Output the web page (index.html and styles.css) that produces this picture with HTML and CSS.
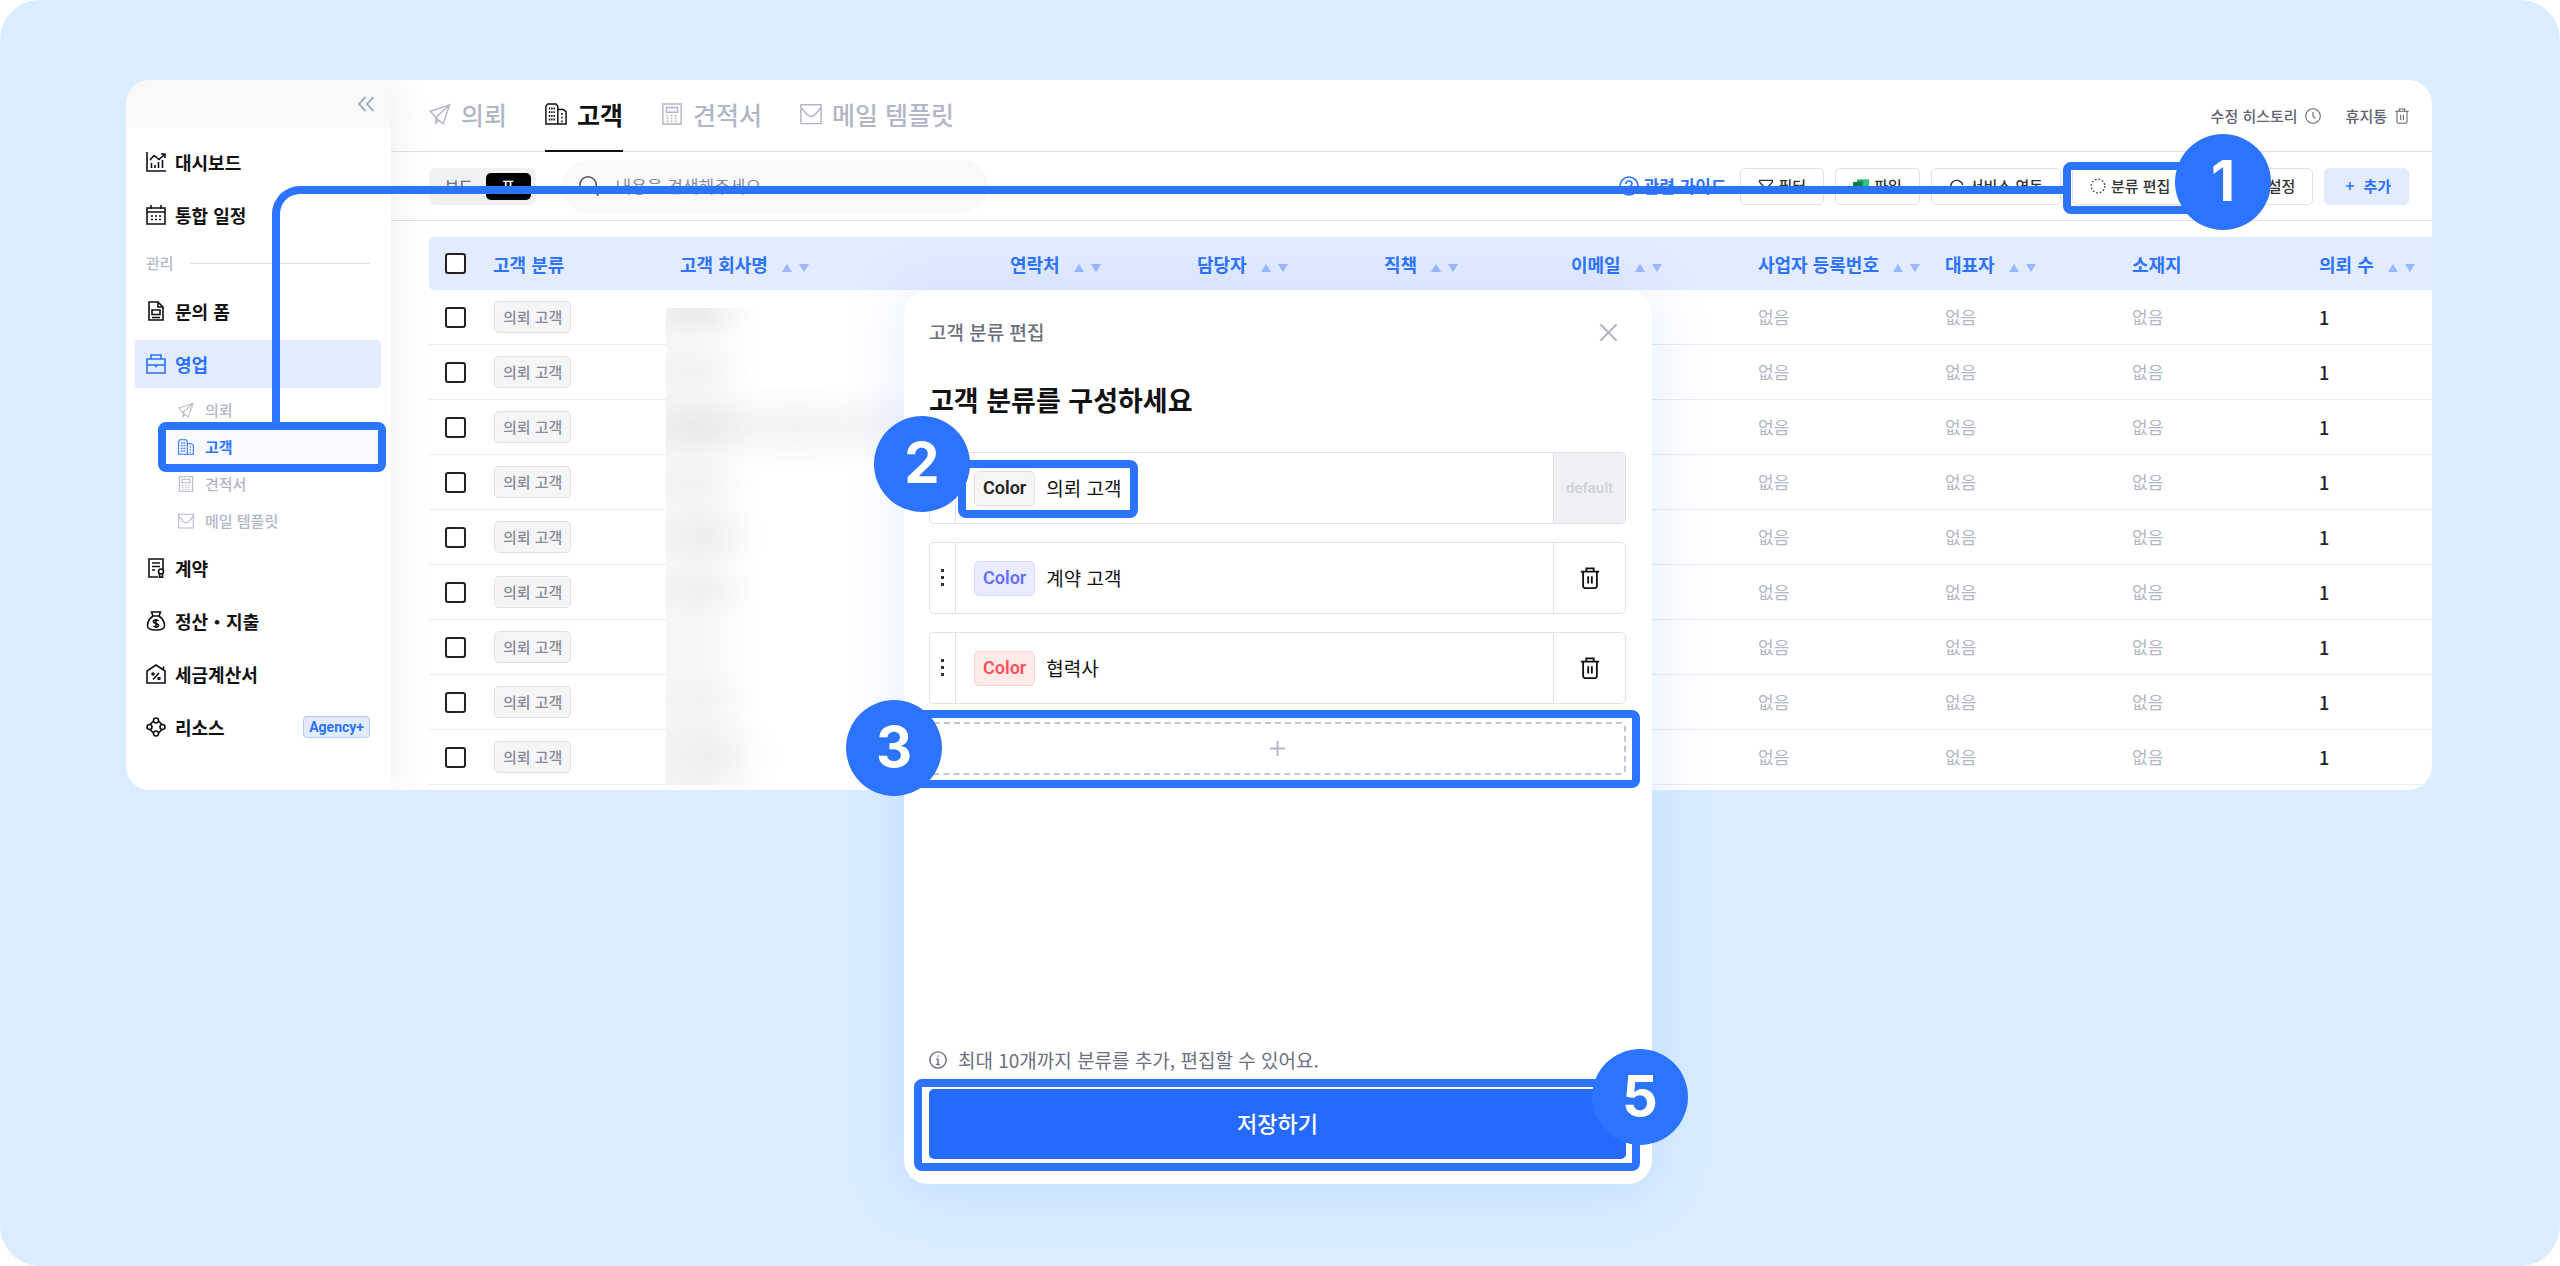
FILE: index.html
```html
<!DOCTYPE html>
<html lang="ko">
<head>
  <meta charset="UTF-8">
  <title>고객 분류 편집 가이드</title>
  <link rel="stylesheet" href="styles.css">
</head>
<body>

  <!-- icon sprite -->
  <svg class="sprite" aria-hidden="true">
    <symbol id="i-plane" viewBox="0 0 24 24"><path d="M1.500 9 22.500 2 15.500 22.500 10 18.500 1.500 9ZM22.500 2 7.500 15.500M7.500 15.500V22l3-3.500"/></symbol>
    <symbol id="i-building" viewBox="0 0 24 24"><path d="M1 23V3.500L3 1h9l2 2.500V23ZM14 7h6l3 2.500V23h-9"/><path stroke-dasharray="2 2" d="M5 5v15M7.500 5v15M10 5v15M18.500 11v10"/></symbol>
    <symbol id="i-calc" viewBox="0 0 24 24"><path d="M2 1h20v22H2ZM6 5h12v5H6Z"/><path stroke-dasharray="2 2.500" d="M6 14h13M6 17h13M6 20h13"/></symbol>
    <symbol id="i-mail" viewBox="0 0 24 24"><path d="M1 2h22v20.500H1ZM1.500 5.500 8 13q4 3.500 8 0l6.500-7.500"/></symbol>
    <symbol id="i-trash" viewBox="0 0 24 24"><path d="M2 5h20M8 5V1.500h8V5M4.500 5v16.500l1.500 1.500h12l1.500-1.500V5M10 10v8M14 10v8"/></symbol>
  </svg>

  <div class="canvas">
    <div class="app">

      <aside class="sidebar">
        <div class="sidebar-top">
          <button class="icon-btn" aria-label="메뉴 접기">
            <svg class="icon collapse" viewBox="0 0 18 16"><path d="M8.500 1 2 8l6.500 7M16.500 1 10 8l6.500 7"/></svg>
          </button>
        </div>
        <nav class="menu">
          <a class="menu-item" href="#"><svg class="icon" viewBox="0 0 20 20"><path d="M1 0v19h19M5.500 16v-5M9 16v-3M12.500 16v-6M16.500 16V8M4 8l4-4.500 5 4L19 2M15 2h4v4"/></svg>대시보드</a>
          <a class="menu-item" href="#"><svg class="icon" viewBox="0 0 20 20"><path d="M1 3h18v16H1ZM1 7h18M5 0v4M15 0v4"/><path stroke-dasharray="2 2" d="M5 11h10M5 14.500h10"/></svg>통합 일정</a>
          <div class="menu-label">관리</div>
          <a class="menu-item" href="#"><svg class="icon" viewBox="0 0 20 20"><path d="M3 1h9l5 5v13H3ZM6 9h8v4.500H6ZM6 16.500h8M12 1v5h5"/></svg>문의 폼</a>
          <a class="menu-item active" href="#"><svg class="icon" viewBox="0 0 20 20"><path d="M1 5h18v14H1ZM5 5V1h10v4M1 11h18M9 11l1 1.500 1-1.500"/></svg>영업</a>
          <div class="submenu">
            <a class="sub-item" href="#"><svg class="icon"><use href="#i-plane"/></svg>의뢰</a>
            <a class="sub-item current" href="#"><svg class="icon"><use href="#i-building"/></svg>고객<span class="frame frame-menu"></span></a>
            <a class="sub-item" href="#"><svg class="icon"><use href="#i-calc"/></svg>견적서</a>
            <a class="sub-item" href="#"><svg class="icon"><use href="#i-mail"/></svg>메일 템플릿</a>
          </div>
          <a class="menu-item" href="#"><svg class="icon" viewBox="0 0 20 20"><path d="M12 19H3V1h14v10M6 5h8M6 8.500h8M6 12h3"/><circle cx="15" cy="13.500" r="2.500"/><path d="M13.500 16v4l1.500-1 1.500 1v-4"/></svg>계약</a>
          <a class="menu-item" href="#"><svg class="icon" viewBox="0 0 20 20"><path d="M7 5 5.500 1h9L13 5ZM7 5C3 8 1.500 11 1.500 14.500 1.500 18 4 19 10 19s8.500-1 8.500-4.500C18.500 11 17 8 13 5M12.500 10Q10 8 8 9.500T10 12.500 12 15.500 7.500 15M10 8v9"/></svg>정산・지출</a>
          <a class="menu-item" href="#"><svg class="icon" viewBox="0 0 20 20"><path d="M1 19V7l9-6 9 6v12ZM17.500 6V2.500M13 9l-6 6.500"/><circle cx="7" cy="10" r="1"/><circle cx="13" cy="14.500" r="1"/></svg>세금계산서</a>
          <a class="menu-item" href="#"><svg class="icon" viewBox="0 0 20 20"><circle cx="10" cy="3.500" r="2.500"/><circle cx="10" cy="16.500" r="2.500"/><circle cx="3.500" cy="10" r="2.500"/><circle cx="16.500" cy="10" r="2.500"/><path d="M4 7.500 7.500 4M12.500 4 16 7.500M4 12.500 7.500 16M12.500 16l3.500-3.500"/></svg>리소스<span class="plan">Agency+</span></a>
        </nav>
      </aside>

      <main class="main">
        <header class="tabs">
          <a class="tab" href="#"><svg class="icon"><use href="#i-plane"/></svg>의뢰</a>
          <a class="tab selected" href="#"><svg class="icon"><use href="#i-building"/></svg>고객</a>
          <a class="tab" href="#"><svg class="icon"><use href="#i-calc"/></svg>견적서</a>
          <a class="tab" href="#"><svg class="icon"><use href="#i-mail"/></svg>메일 템플릿</a>
          <div class="tab-tools">
            <a href="#">수정 히스토리 <svg class="icon" viewBox="0 0 24 24"><circle cx="12" cy="12" r="11"/><path d="M12 6v6l3.500 3.500"/></svg></a>
            <a href="#">휴지통 <svg class="icon"><use href="#i-trash"/></svg></a>
          </div>
        </header>

        <div class="toolbar">
          <div class="switch">
            <button>보드</button>
            <button class="on">표</button>
          </div>
          <label class="search">
            <svg class="icon" viewBox="0 0 24 24"><circle cx="11" cy="11" r="9"/><path d="m17.500 17.500 5 5"/></svg>
            <input type="text" placeholder="내용을 검색해주세요" aria-label="검색">
          </label>
          <a class="guide" href="#"><svg class="icon" viewBox="0 0 20 20"><circle cx="10" cy="10" r="9"/><path d="M7 8Q7 5 10 5t3 3q0 1.500-3 3v1.500M10 14v1.500"/></svg>관련 가이드</a>
          <button class="btn"><svg class="icon" viewBox="0 0 20 20"><path d="M2 3h16v2l-6 7v6l-4-2v-4L2 5Z"/></svg>필터</button>
          <button class="btn"><svg class="icon excel" viewBox="0 0 20 20"><path fill="#21a366" d="M5 2h15v8H5Z"/><path fill="#33c481" d="M13 2h7v8h-7Z"/><path fill="#185c37" d="M5 10h15v8H5Z"/><path fill="#107c41" d="M0 5h11v10H0Z"/></svg>파일</button>
          <button class="btn"><svg class="icon" viewBox="0 0 20 20"><path d="M7 17.500A7.500 7.500 0 1 1 17 9M3 18h4v-4M13 14h6M13 18h6"/></svg>서비스 연동</button>
          <button class="btn edit-btn"><svg class="icon" viewBox="0 0 20 20"><circle cx="10" cy="10" r="8.500" stroke-dasharray="2 2.500"/></svg>분류 편집
            <span class="frame frame-edit"></span><span class="step step-edit">1</span></button>
          <button class="btn set-btn">설정</button>
          <button class="btn add-btn"><svg class="icon" viewBox="0 0 20 20"><path d="M10 5v10M5 10h10"/></svg>추가</button>
        </div>

        <div class="table-wrap">
          <table>
            <thead>
              <tr>
                <th class="c-check"><input type="checkbox" aria-label="전체 선택"></th>
                <th class="c-std">고객 분류</th>
                <th class="c-wide">고객 회사명<i class="sort"></i></th>
                <th class="c-std">연락처<i class="sort"></i></th>
                <th class="c-std">담당자<i class="sort"></i></th>
                <th class="c-std">직책<i class="sort"></i></th>
                <th class="c-std">이메일<i class="sort"></i></th>
                <th class="c-std">사업자 등록번호<i class="sort"></i></th>
                <th class="c-std">대표자<i class="sort"></i></th>
                <th class="c-std">소재지</th>
                <th>의뢰 수<i class="sort"></i></th>
              </tr>
            </thead>
            <tbody>
              <tr><td><input type="checkbox" aria-label="선택"></td><td><span class="tag">의뢰 고객</span></td><td colspan="5"></td><td>없음</td><td>없음</td><td>없음</td><td class="num">1</td></tr>
              <tr><td><input type="checkbox" aria-label="선택"></td><td><span class="tag">의뢰 고객</span></td><td colspan="5"></td><td>없음</td><td>없음</td><td>없음</td><td class="num">1</td></tr>
              <tr><td><input type="checkbox" aria-label="선택"></td><td><span class="tag">의뢰 고객</span></td><td colspan="5"></td><td>없음</td><td>없음</td><td>없음</td><td class="num">1</td></tr>
              <tr><td><input type="checkbox" aria-label="선택"></td><td><span class="tag">의뢰 고객</span></td><td colspan="5"></td><td>없음</td><td>없음</td><td>없음</td><td class="num">1</td></tr>
              <tr><td><input type="checkbox" aria-label="선택"></td><td><span class="tag">의뢰 고객</span></td><td colspan="5"></td><td>없음</td><td>없음</td><td>없음</td><td class="num">1</td></tr>
              <tr><td><input type="checkbox" aria-label="선택"></td><td><span class="tag">의뢰 고객</span></td><td colspan="5"></td><td>없음</td><td>없음</td><td>없음</td><td class="num">1</td></tr>
              <tr><td><input type="checkbox" aria-label="선택"></td><td><span class="tag">의뢰 고객</span></td><td colspan="5"></td><td>없음</td><td>없음</td><td>없음</td><td class="num">1</td></tr>
              <tr><td><input type="checkbox" aria-label="선택"></td><td><span class="tag">의뢰 고객</span></td><td colspan="5"></td><td>없음</td><td>없음</td><td>없음</td><td class="num">1</td></tr>
              <tr><td><input type="checkbox" aria-label="선택"></td><td><span class="tag">의뢰 고객</span></td><td colspan="5"></td><td>없음</td><td>없음</td><td>없음</td><td class="num">1</td></tr>
            </tbody>
          </table>
          <div class="mask"></div>
        </div>
      </main>
    </div>

    <section class="modal" role="dialog" aria-labelledby="modal-name">
      <header class="modal-head">
        <span id="modal-name">고객 분류 편집</span>
        <button class="icon-btn" aria-label="닫기"><svg class="icon close" viewBox="0 0 20 20"><path d="m1.500 1.500 17 17M18.500 1.500l-17 17"/></svg></button>
      </header>
      <h2>고객 분류를 구성하세요</h2>

      <div class="rows">
        <div class="row">
          <span class="grip"></span>
          <div class="field">
            <button class="chip">Color</button>
            <input type="text" value="의뢰 고객" aria-label="분류 이름">
            <span class="frame frame-field"></span><span class="step step-field">2</span>
          </div>
          <span class="default">default</span>
        </div>
        <div class="row">
          <span class="grip"><svg viewBox="0 0 4 18"><path d="M0 0h3v3H0ZM0 7h3v3H0ZM0 14h3v3H0Z"/></svg></span>
          <div class="field">
            <button class="chip violet">Color</button>
            <input type="text" value="계약 고객" aria-label="분류 이름">
          </div>
          <button class="remove" aria-label="삭제"><svg class="icon"><use href="#i-trash"/></svg></button>
        </div>
        <div class="row">
          <span class="grip"><svg viewBox="0 0 4 18"><path d="M0 0h3v3H0ZM0 7h3v3H0ZM0 14h3v3H0Z"/></svg></span>
          <div class="field">
            <button class="chip red">Color</button>
            <input type="text" value="협력사" aria-label="분류 이름">
          </div>
          <button class="remove" aria-label="삭제"><svg class="icon"><use href="#i-trash"/></svg></button>
        </div>
        <button class="add-row" aria-label="분류 추가">
          <svg class="icon" viewBox="0 0 16 16"><path d="M8 0v16M0 8h16"/></svg>
          <span class="frame frame-add"></span><span class="step step-add">3</span>
        </button>
      </div>

      <footer class="modal-foot">
        <p><svg class="icon" viewBox="0 0 20 20"><circle cx="10" cy="10" r="9"/><path d="M8 9h2v6M10 5v1.500M8 15h4"/></svg>최대 10개까지 분류를 추가, 편집할 수 있어요.</p>
        <button class="save">저장하기<span class="frame frame-save"></span><span class="step step-save">5</span></button>
      </footer>
    </section>

    <!-- line from the menu item to step 1 -->
    <div class="connector"></div>
  </div>

</body>
</html>
```
FILE: styles.css
```css
* {
  box-sizing: border-box;
}
body {
  margin: 0;
  background: #fff;
  font-family: "Noto Sans CJK KR", sans-serif;
  font-size: 18px;
  line-height: 24px;
  color: #111;
}
a {
  color: inherit;
  text-decoration: none;
}
button, input {
  font: inherit;
  color: inherit;
  background: none;
  border: none;
  padding: 0;
  margin: 0;
}
button {
  cursor: pointer;
}
.sprite {
  display: none;
}
.icon {
  width: 20px;
  height: 20px;
  flex: none;
  fill: none;
  stroke: currentColor;
  stroke-width: 1.6;
}
.canvas {
  position: relative;
  min-height: 100vh;
  padding: 80px 128px 0 126px;
  background: #d9edff;
  border-radius: 40px;
}
.app {
  display: flex;
  isolation: isolate;
  background: #fff;
  border-radius: 24px;
  overflow: hidden;
}

/* sidebar */
.sidebar {
  position: relative;
  z-index: 1;
  width: 265px;
  flex: none;
  background: #fff;
  box-shadow: 0 0 40px rgba(30, 45, 80, 0.09);
}
.sidebar-top {
  display: flex;
  align-items: center;
  justify-content: flex-end;
  height: 48px;
  padding-right: 16px;
  background: #f9f9f9;
}
.icon-btn {
  display: flex;
  color: #a9afc0;
}
.icon-btn .icon {
  stroke-width: 2;
}
.collapse {
  width: 18px;
  height: 16px;
}
.menu {
  display: flex;
  flex-direction: column;
  gap: 5px;
  padding: 10px 10px 0 9px;
}
.menu-item {
  display: flex;
  align-items: center;
  gap: 9px;
  height: 48px;
  padding: 0 11px;
  border-radius: 4px;
  font-weight: 700;
}
.menu-item.active {
  background: #e3ebff;
  color: #2c73ff;
}
.menu-label {
  display: flex;
  align-items: center;
  gap: 16px;
  height: 38px;
  padding: 0 11px;
  font-size: 15px;
  font-weight: 500;
  color: #b1b7c6;
}
.menu-label::after {
  content: "";
  flex: 1;
  height: 1px;
  background: #dfe1ea;
}
.submenu {
  margin-top: -2px;
  padding-left: 33px;
}
.sub-item {
  position: relative;
  display: flex;
  align-items: center;
  gap: 11px;
  height: 37px;
  padding-left: 10px;
  font-size: 15px;
  font-weight: 500;
  color: #b1b7c6;
}
.sub-item .icon {
  width: 16px;
  height: 16px;
}
.sub-item.current {
  background: #f7f9ff;
  color: #2c73ff;
  font-weight: 700;
}
.plan {
  margin-left: auto;
  padding: 0 5px;
  border: 1px solid #b3cbff;
  border-radius: 4px;
  background: #e3ebff;
  color: #2c73ff;
  font: 700 14px/20px Roboto, sans-serif;
}

/* tabs */
.main {
  flex: 1;
  min-width: 0;
  padding-bottom: 5px;
}
.tabs {
  display: flex;
  gap: 38px;
  height: 72px;
  padding: 0 22px 0 38px;
  border-bottom: 1px solid #dfe1ea;
}
.tab {
  display: flex;
  align-items: center;
  gap: 10px;
  height: 72px;
  padding-bottom: 2px;
  border-bottom: 2px solid transparent;
  font-size: 25px;
  font-weight: 500;
  color: #b1b7c6;
}
.tab .icon {
  width: 22px;
  height: 22px;
}
.tab.selected {
  color: #111;
  font-weight: 700;
  border-bottom-color: #111;
}
.tab-tools {
  display: flex;
  align-items: center;
  gap: 25px;
  margin-left: auto;
  font-size: 15px;
  font-weight: 500;
  color: #5f6473;
}
.tab-tools a {
  display: flex;
  align-items: center;
  gap: 7px;
}
.tab-tools .icon {
  width: 16px;
  height: 16px;
}

/* toolbar */
.toolbar {
  display: flex;
  align-items: center;
  gap: 11px;
  height: 69px;
  padding: 0 23px 0 38px;
  border-bottom: 1px solid #dfe1ea;
}
.switch {
  display: flex;
  align-items: center;
  height: 37px;
  padding: 0 5px 0 16px;
  gap: 13px;
  border-radius: 6px;
  background: #f0f1f3;
  font-size: 15px;
  font-weight: 500;
  color: #6b7080;
}
.switch .on {
  width: 45px;
  height: 27px;
  border-radius: 5px;
  background: #000;
  color: #fff;
}
.search {
  display: flex;
  align-items: center;
  gap: 16px;
  width: 426px;
  height: 53px;
  margin-left: 15px;
  padding: 0 16px;
  border-radius: 28px;
  background: #f9f9f9;
  font-size: 17px;
}
.search .icon {
  width: 22px;
  height: 22px;
  color: #4d5160;
}
.search input {
  flex: 1;
  outline: none;
}
.search input::placeholder {
  color: #858b9b;
}
.guide {
  display: flex;
  align-items: center;
  gap: 5px;
  margin: 0 2px 0 auto;
  font-size: 17px;
  font-weight: 700;
  color: #2c73ff;
}
.btn {
  position: relative;
  display: flex;
  align-items: center;
  gap: 5px;
  height: 37px;
  padding: 0 17px;
  border: 1px solid #dfe1ea;
  border-radius: 5px;
  font-size: 15px;
  font-weight: 500;
  color: #333;
  white-space: nowrap;
}
.btn .icon {
  width: 16px;
  height: 16px;
}
.btn .excel {
  stroke: none;
}
.set-btn {
  width: 114px;
  justify-content: flex-end;
}
.add-btn {
  border-color: #e3ebff;
  background: #e3ebff;
  color: #2c73ff;
  font-weight: 700;
}
.add-btn .icon {
  stroke-width: 2;
}

/* table */
.table-wrap {
  position: relative;
  padding: 16px 0 0 38px;
}
table {
  width: 100%;
  table-layout: fixed;
  border-collapse: separate;
  border-spacing: 0;
}
th {
  height: 53px;
  padding: 0;
  background: #e3ebff;
  color: #2c73ff;
  font-weight: 700;
  text-align: left;
  white-space: nowrap;
}
th:first-child {
  border-radius: 5px 0 0 5px;
}
td {
  height: 55px;
  padding: 0;
  border-bottom: 1px solid #ebecf0;
  font-size: 17px;
  color: #b1b7c6;
}
td.num {
  font-size: 18px;
  font-weight: 500;
  color: #222;
}
.c-check {
  width: 64px;
}
.c-std {
  width: 187px;
}
.c-wide {
  width: 330px;
}
.sort {
  display: inline-flex;
  gap: 7px;
  margin-left: 14px;
}
.sort::before, .sort::after {
  content: "";
  border: 5px solid transparent;
  border-top-width: 0;
  border-bottom: 8px solid #98b9ff;
}
.sort::after {
  border-top: 8px solid #98b9ff;
  border-bottom-width: 0;
}
input[type="checkbox"] {
  display: block;
  appearance: none;
  width: 21px;
  height: 21px;
  margin-left: 16px;
  border: 2px solid #222;
  border-radius: 3px;
  background: #fff;
}
.tag {
  display: inline-block;
  margin-left: 1px;
  padding: 3px 8px;
  border: 1px solid #dfe1ea;
  border-radius: 5px;
  background: #f5f5f5;
  font-size: 15px;
  font-weight: 500;
  color: #858b9b;
}
.mask {
  position: absolute;
  left: 275px;
  right: 780px;
  top: 87px;
  bottom: 0;
  background:
    radial-gradient(60px 26px at 28px 6px, rgba(0, 0, 0, 0.05), transparent),
    radial-gradient(60px 26px at 28px 64px, rgba(0, 0, 0, 0.02), transparent),
    radial-gradient(60px 30px at 34px 118px, rgba(0, 0, 0, 0.02), transparent),
    radial-gradient(280px 42px at 130px 118px, rgba(0, 0, 0, 0.05), transparent),
    radial-gradient(60px 30px at 32px 174px, rgba(0, 0, 0, 0.02), transparent),
    radial-gradient(60px 36px at 40px 228px, rgba(0, 0, 0, 0.04), transparent),
    radial-gradient(60px 30px at 36px 282px, rgba(0, 0, 0, 0.03), transparent),
    radial-gradient(60px 30px at 40px 390px, rgba(0, 0, 0, 0.02), transparent),
    radial-gradient(70px 50px at 46px 448px, rgba(0, 0, 0, 0.04), transparent),
    linear-gradient(to right, #f6f6f6, #f7f7f7 40px, #fff 90px);
}

/* modal */
.modal {
  position: absolute;
  top: 290px;
  bottom: 82px;
  left: calc(50% - 376px);
  width: 748px;
  display: flex;
  flex-direction: column;
  padding: 26px 26px 25px 25px;
  border-radius: 24px;
  background: #fff;
  box-shadow: 0 4px 60px rgba(44, 115, 255, 0.15);
}
.modal-head {
  display: flex;
  align-items: center;
  justify-content: space-between;
  height: 32px;
  padding-right: 8px;
  font-size: 19px;
  font-weight: 500;
  color: #6b7080;
}
.close {
  width: 19px;
  height: 19px;
}
h2 {
  margin: 32px 0;
  font-size: 27px;
  line-height: 40px;
  font-weight: 700;
}
.rows {
  display: flex;
  flex-direction: column;
  gap: 18px;
}
.row {
  display: flex;
  height: 72px;
  border: 1px solid #dfe1ea;
  border-radius: 5px;
}
.grip {
  display: flex;
  align-items: center;
  justify-content: center;
  width: 26px;
  border-right: 1px solid #dfe1ea;
}
.grip svg {
  width: 4px;
  height: 18px;
  fill: #333;
}
.field {
  position: relative;
  flex: 1;
  display: flex;
  align-items: center;
  gap: 11px;
  padding-left: 18px;
  font-size: 19px;
}
.field input {
  flex: 1;
  outline: none;
}
.chip {
  height: 35px;
  padding: 0 8px;
  border: 1px solid #dfe1ea;
  border-radius: 5px;
  background: #f5f5f5;
  font: 600 18px/24px Roboto, sans-serif;
  color: #222;
}
.chip.violet {
  border-color: #d8dbff;
  background: #ebecff;
  color: #6470ff;
}
.chip.red {
  border-color: #ffd0d0;
  background: #ffeaea;
  color: #ff5058;
}
.default, .remove {
  display: flex;
  align-items: center;
  justify-content: center;
  width: 72px;
  border-left: 1px solid #dfe1ea;
}
.default {
  background: #eff0f3;
  font: 600 15px/20px Roboto, sans-serif;
  color: #cfd2de;
}
.remove .icon {
  width: 22px;
  height: 24px;
  stroke-width: 2;
}
.add-row {
  position: relative;
  display: flex;
  align-items: center;
  justify-content: center;
  height: 53px;
  border: 2px dashed #c3c7d3;
  border-radius: 5px;
  color: #b1b7c6;
}
.add-row .icon {
  width: 15px;
  height: 15px;
  stroke-width: 2;
}
.modal-foot {
  margin-top: auto;
}
.modal-foot p {
  display: flex;
  align-items: center;
  gap: 11px;
  margin: 0 0 17px;
  font-size: 19px;
  color: #6b7080;
}
.modal-foot .icon {
  width: 18px;
  height: 18px;
}
.save {
  position: relative;
  width: 100%;
  height: 70px;
  padding-bottom: 4px;
  border-radius: 5px;
  background: #2669ff;
  color: #fff;
  font-size: 22px;
  font-weight: 500;
}

/* guide annotations, laid over the screen */
.frame {
  position: absolute;
  border: 8px solid #2c73ff;
  border-radius: 8px;
}
.frame-menu {
  inset: -6px -5px -7px -10px;
}
.frame-edit {
  inset: -7px -40px -10px -10px;
}
.frame-field {
  left: 2px;
  top: 7px;
  width: 180px;
  height: 58px;
}
.frame-add {
  inset: -14px -16px -15px -17px;
}
.frame-save {
  inset: -10px -14px -12px -15px;
}
.step {
  position: absolute;
  z-index: 2;
  width: 96px;
  height: 96px;
  border-radius: 50%;
  background: #2c73ff;
  color: #fff;
  font: 700 56px/94px Inter, sans-serif;
  text-align: center;
}
.step-edit {
  left: 102px;
  top: -35px;
}
.step-field {
  left: -82px;
  top: -37px;
}
.step-add {
  left: -85px;
  top: -24px;
}
.step-save {
  right: -62px;
  top: -40px;
}
.connector {
  position: absolute;
  left: 272px;
  right: 494px;
  top: 186px;
  height: 240px;
  border: solid #2c73ff;
  border-width: 8px 0 0 8px;
  border-top-left-radius: 28px;
  pointer-events: none;
}
```
